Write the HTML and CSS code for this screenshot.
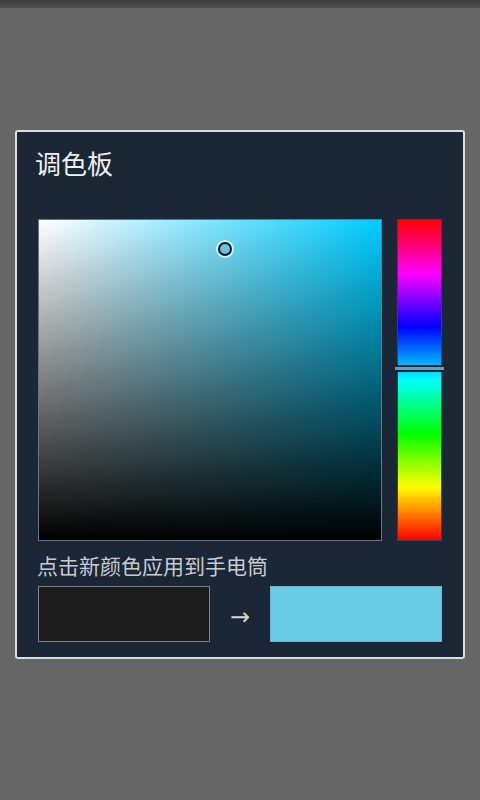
FILE: index.html
```html
<!DOCTYPE html>
<html lang="zh">
<head>
<meta charset="utf-8">
<link rel="stylesheet" href="styles.css">
</head>
<body>
<div class="statusbar"></div>
<div class="dialog">
  <div class="title">调色板</div>
  <div class="picker">
    <div class="sv">
      <div class="sv-marker"></div>
    </div>
    <div class="hue">
      <div class="hue-marker"></div>
    </div>
  </div>
  <div class="hint">点击新颜色应用到手电筒</div>
  <div class="swatches">
    <div class="swatch old"></div>
    <div class="arrow">→</div>
    <div class="swatch new"></div>
  </div>
</div>
</body>
</html>
```
FILE: styles.css
```css
html, body {
  margin: 0;
  padding: 0;
  background: #666666;
  font-family: "Noto Sans CJK SC", "Noto Sans", sans-serif;
}
body {
  width: 480px;
  height: 800px;
  overflow: hidden;
}
.statusbar {
  height: 8px;
  background: linear-gradient(to bottom, #3c3c3c, #505050);
}
.dialog {
  margin: 122px 0 0 15px;
  border: 2px solid #dcdcdc;
  border-radius: 3px;
  background: #1b2637;
  padding: 0 21px 15px;
  box-sizing: content-box;
  width: 404px;
}
.title {
  padding-top: 14px;
  margin-left: -3px;
  font-size: 26px;
  line-height: 34px;
  color: #f0f0f0;
}
.picker {
  margin-top: 39px;
  display: flex;
  gap: 15px;
  height: 322px;
}
.sv {
  position: relative;
  width: 342px;
  height: 320px;
  border: 1px solid #6b7480;
  background:
    linear-gradient(to top, #000 0%, rgba(0,0,0,0) 100%),
    linear-gradient(to right, #ffffff 0%, #00ccff 100%);
}
.sv-marker {
  position: absolute;
  left: 179px;
  top: 22px;
  width: 10px;
  height: 10px;
  border: 2px solid #0b1a22;
  border-radius: 50%;
  background: #6cc4dc;
  box-shadow: 0 0 0 2px rgba(255,255,255,0.7);
}
.hue {
  position: relative;
  width: 43px;
  height: 320px;
  border: 1px solid #3a4452;
  background: linear-gradient(to bottom,
    #ff0000 0%, #ff00ff 16.67%, #0000ff 33.33%, #00ffff 50%,
    #00ff00 66.67%, #ffff00 83.33%, #ff0000 100%);
}
.hue-marker {
  position: absolute;
  left: -3px;
  right: -3px;
  top: 145px;
  height: 3px;
  background: #5aa3c4;
  border-top: 2px solid #15222e;
  border-bottom: 2px solid #15222e;
}
.hint {
  margin-top: 12px;
  margin-left: -1px;
  font-size: 21px;
  line-height: 25px;
  color: #c8ccd0;
}
.swatches {
  margin-top: 8px;
  display: flex;
  align-items: center;
  justify-content: space-between;
}
.swatch {
  width: 170px;
  height: 54px;
  border: 1px solid #7f858c;
}
.old {
  background: #1c1c1c;
}
.new {
  background: #69cce6;
  border-color: #6fb6cc;
}
.arrow {
  font-size: 24px;
  line-height: 24px;
  color: #d0d4d8;
  font-family: "DejaVu Sans", sans-serif;
  padding-top: 6px;
}
```
